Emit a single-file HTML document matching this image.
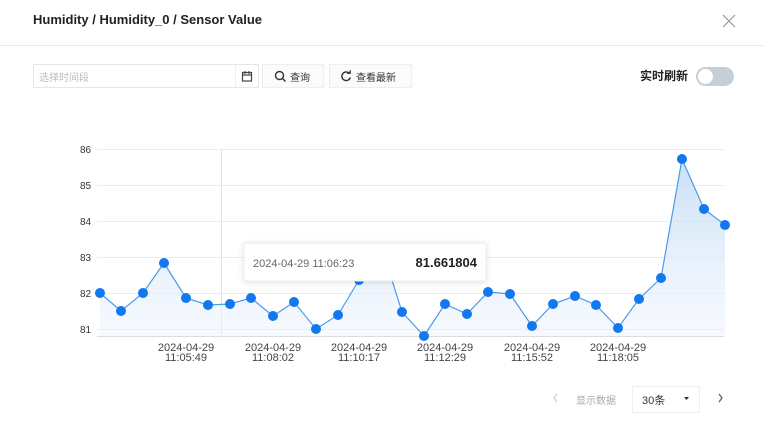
<!DOCTYPE html>
<html><head><meta charset="utf-8"><style>
body{margin:0;width:764px;height:426px;background:#fff;overflow:hidden;font-family:"Liberation Sans","Noto Sans CJK SC",sans-serif;position:relative}
.a{position:absolute}
</style></head><body>
<div class="a" style="left:33px;top:12px;font-size:13px;font-weight:bold;color:#222">Humidity / Humidity_0 / Sensor Value</div>
<svg class="a" style="left:722px;top:14px" width="14" height="14"><path d="M1 1L13 13M13 1L1 13" stroke="#999" stroke-width="1.2"/></svg>
<div class="a" style="left:0;top:45px;width:764px;height:1px;background:#e8e8e8"></div>
<div class="a" style="left:33px;top:64px;width:226px;height:24px;border:1px solid #e6e6e6;box-sizing:border-box"></div>
<div class="a" style="left:39px;top:69px;font-size:10px;color:#bbb">选择时间段</div>
<div class="a" style="left:235px;top:64px;width:1px;height:24px;background:#eee"></div>
<svg class="a" style="left:241px;top:70px" width="12" height="12"><rect x="1.5" y="2.5" width="9" height="8.5" fill="none" stroke="#444" stroke-width="1.2"/><path d="M1.5 5h9M4 1v3M8 1v3" stroke="#444" stroke-width="1.2"/></svg>
<div class="a" style="left:262px;top:64px;width:62px;height:24px;border:1px solid #eee;box-sizing:border-box;background:#fafbfc"></div>
<svg class="a" style="left:274px;top:70px" width="12" height="12"><circle cx="5.5" cy="5.5" r="4" fill="none" stroke="#333" stroke-width="1.4"/><path d="M8.5 8.5l3 3" stroke="#333" stroke-width="1.4"/></svg>
<div class="a" style="left:290px;top:69px;font-size:10px;color:#333">查询</div>
<div class="a" style="left:329px;top:64px;width:83px;height:24px;border:1px solid #eee;box-sizing:border-box;background:#fafbfc"></div>
<svg class="a" style="left:340px;top:70px" width="12" height="12"><path d="M9.5 3.5A4.3 4.3 0 1 0 10.3 7.5" fill="none" stroke="#333" stroke-width="1.4"/><path d="M7 3.2h3.2V0.2" fill="none" stroke="#333" stroke-width="1.3"/></svg>
<div class="a" style="left:356px;top:69px;font-size:10px;color:#333">查看最新</div>
<div class="a" style="left:640px;top:67px;font-size:12px;font-weight:bold;color:#222">实时刷新</div>
<div class="a" style="left:696px;top:67px;width:38px;height:19px;border-radius:10px;background:#c6ced6"></div>
<div class="a" style="left:698px;top:69px;width:15px;height:15px;border-radius:50%;background:#fff"></div>
<svg class="a" style="left:0;top:0" width="764" height="426">
<defs><linearGradient id="g" x1="0" y1="0" x2="0" y2="1"><stop offset="0" stop-color="#bcd8f5" stop-opacity=".8"/><stop offset="1" stop-color="#eef5fd" stop-opacity=".5"/></linearGradient></defs>
<g stroke="#ececec" stroke-width="1">
<line x1="97" y1="149.5" x2="724" y2="149.5"/><line x1="97" y1="185.5" x2="724" y2="185.5"/><line x1="97" y1="221.5" x2="724" y2="221.5"/><line x1="97" y1="257.5" x2="724" y2="257.5"/><line x1="97" y1="293.5" x2="724" y2="293.5"/><line x1="97" y1="329.5" x2="724" y2="329.5"/>
</g>
<line x1="97" y1="336.5" x2="724" y2="336.5" stroke="#ddd"/>
<line x1="221.5" y1="150" x2="221.5" y2="336" stroke="#e2e2e2"/>
<g font-size="10" fill="#333" font-family="Liberation Sans,sans-serif">
<text x="80" y="153">86</text><text x="80" y="189">85</text><text x="80" y="225">84</text><text x="80" y="261">83</text><text x="80" y="297">82</text><text x="80" y="333">81</text>
</g>
<g font-size="11" fill="#444" text-anchor="middle" font-family="Liberation Sans,sans-serif">
<text x="186" y="351">2024-04-29</text><text x="186" y="361">11:05:49</text>
<text x="273" y="351">2024-04-29</text><text x="273" y="361">11:08:02</text>
<text x="359" y="351">2024-04-29</text><text x="359" y="361">11:10:17</text>
<text x="445" y="351">2024-04-29</text><text x="445" y="361">11:12:29</text>
<text x="532" y="351">2024-04-29</text><text x="532" y="361">11:15:52</text>
<text x="618" y="351">2024-04-29</text><text x="618" y="361">11:18:05</text>
</g>
<path d="M100,293 L121,311 L143,293 L164,263 L186,298 L208,305 L230,304 L251,298 L273,316 L294,302 L316,329 L338,315 L359,280 L381,245 L402,312 L424,336 L445,304 L467,314 L488,292 L510,294 L532,326 L553,304 L575,296 L596,305 L618,328 L639,299 L661,278 L682,159 L704,209 L725,225 L725,336 L100,336Z" fill="url(#g)"/>
<polyline points="100,293 121,311 143,293 164,263 186,298 208,305 230,304 251,298 273,316 294,302 316,329 338,315 359,280 381,245 402,312 424,336 445,304 467,314 488,292 510,294 532,326 553,304 575,296 596,305 618,328 639,299 661,278 682,159 704,209 725,225" fill="none" stroke="#4a9be6" stroke-width="1.2"/>
<g fill="#1377ef">
<circle cx="100" cy="293" r="5"/><circle cx="121" cy="311" r="5"/><circle cx="143" cy="293" r="5"/><circle cx="164" cy="263" r="5"/><circle cx="186" cy="298" r="5"/><circle cx="208" cy="305" r="5"/><circle cx="230" cy="304" r="5"/><circle cx="251" cy="298" r="5"/><circle cx="273" cy="316" r="5"/><circle cx="294" cy="302" r="5"/><circle cx="316" cy="329" r="5"/><circle cx="338" cy="315" r="5"/><circle cx="359" cy="280" r="5"/><circle cx="402" cy="312" r="5"/><circle cx="424" cy="336" r="5"/><circle cx="445" cy="304" r="5"/><circle cx="467" cy="314" r="5"/><circle cx="488" cy="292" r="5"/><circle cx="510" cy="294" r="5"/><circle cx="532" cy="326" r="5"/><circle cx="553" cy="304" r="5"/><circle cx="575" cy="296" r="5"/><circle cx="596" cy="305" r="5"/><circle cx="618" cy="328" r="5"/><circle cx="639" cy="299" r="5"/><circle cx="661" cy="278" r="5"/><circle cx="682" cy="159" r="5"/><circle cx="704" cy="209" r="5"/><circle cx="725" cy="225" r="5"/>
</g>
<rect x="244" y="243" width="242" height="38" fill="#fff" stroke="#eee" rx="2" style="filter:drop-shadow(0 1px 3px rgba(0,0,0,.12))"/>
<text x="253" y="267" font-size="11" fill="#666" font-family="Liberation Sans,sans-serif">2024-04-29 11:06:23</text>
<text x="477" y="267" font-size="13" font-weight="bold" fill="#222" text-anchor="end" font-family="Liberation Sans,sans-serif">81.661804</text>
<path d="M557 394l-3 4 3 4" fill="none" stroke="#ccc" stroke-width="1.2"/>
<path d="M719 394l3 4-3 4" fill="none" stroke="#555" stroke-width="1.2"/>
<rect x="632.5" y="386.5" width="67" height="26" fill="#fff" stroke="#eee"/>
<path d="M684 397h5l-2.5 3z" fill="#333"/>
</svg>
<div class="a" style="left:576px;top:392px;font-size:10px;color:#aaa">显示数据</div>
<div class="a" style="left:642px;top:392px;font-size:11px;color:#333">30条</div>
</body></html>
